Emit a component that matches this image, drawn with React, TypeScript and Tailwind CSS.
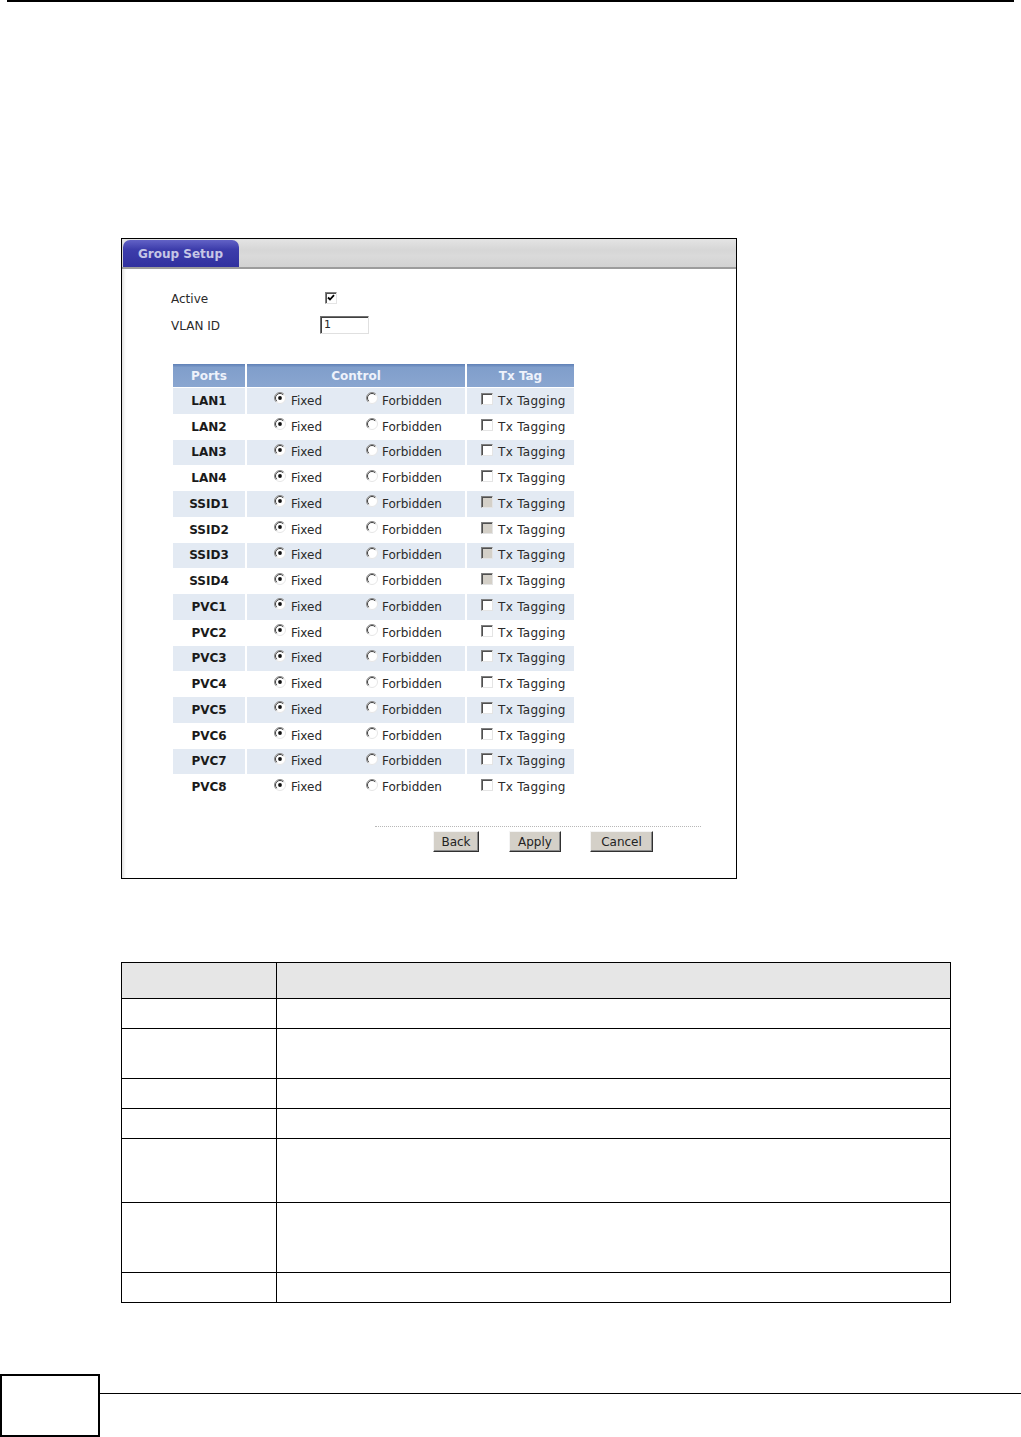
import React from "react";

const ports = [
  "LAN1", "LAN2", "LAN3", "LAN4",
  "SSID1", "SSID2", "SSID3", "SSID4",
  "PVC1", "PVC2", "PVC3", "PVC4", "PVC5", "PVC6", "PVC7", "PVC8",
];

function Radio({ checked }: { checked: boolean }) {
  return (
    <svg width="12" height="12" viewBox="0 0 12 12" className="shrink-0 mb-[5px]">
      <circle cx="6" cy="6" r="5.5" fill="#ffffff" />
      <path d="M2.1 9.9 A5.5 5.5 0 0 1 9.9 2.1" stroke="#8a8a8a" strokeWidth="1" fill="none" />
      <path d="M9.9 2.1 A5.5 5.5 0 0 1 2.1 9.9" stroke="#e6e6e6" strokeWidth="1" fill="none" />
      <path d="M2.8 9.2 A4.5 4.5 0 0 1 9.2 2.8" stroke="#404040" strokeWidth="1" fill="none" />
      {checked && <circle cx="6" cy="6" r="1.9" fill="#111111" />}
    </svg>
  );
}

function Box({ checked = false, disabled = false }: { checked?: boolean; disabled?: boolean }) {
  return (
    <span
      className={
        disabled
          ? "shrink-0 w-[12px] h-[12px] border border-t-[#808080] border-l-[#808080] border-r-[#e4e4e4] border-b-[#e4e4e4] bg-[#d4d0c8] shadow-[inset_1px_1px_0_#505050] mb-[4px] flex items-center justify-center"
          : "shrink-0 w-[12px] h-[12px] border border-t-[#808080] border-l-[#808080] border-r-[#e4e4e4] border-b-[#e4e4e4] bg-white shadow-[inset_1px_1px_0_#505050] mb-[4px] flex items-center justify-center"
      }
    >
      {checked && (
        <svg width="8" height="8" viewBox="0 0 8 8">
          <path d="M1 3.5 L3 5.5 L7 1.2" stroke="#000" strokeWidth="1.8" fill="none" />
        </svg>
      )}
    </span>
  );
}

function Btn({ label, w }: { label: string; w: string }) {
  return (
    <div
      className={
        "h-[21px] flex items-center justify-center bg-[#d4d0c8] border border-t-[#f4f4f4] border-l-[#f4f4f4] border-r-[#303030] border-b-[#303030] shadow-[inset_-1px_-1px_0_#8a8a8a] text-[12px] text-[#222]" +
        " " +
        w
      }
    >
      {label}
    </div>
  );
}

export default function App() {
  const tableRows = [36, 30, 50, 30, 30, 64, 70, 30];
  return (
    <div className="w-[1021px] h-[1437px] bg-white overflow-hidden font-['DejaVu_Sans',sans-serif] flex flex-col">
      {/* top rule */}
      <div className="mx-[7px] h-[2px] bg-black shrink-0" />

      {/* screen panel */}
      <div className="ml-[121px] mt-[236px] w-[616px] h-[641px] border border-black flex flex-col shrink-0 shadow-[inset_4px_0_3px_-2px_#e2e2e2]">
        <div className="h-[30px] shrink-0 bg-[linear-gradient(#e4e4e4,#d6d6d6_40%,#dadada_60%,#d2d2d2)] border-b-2 border-b-[#9c9c9c] flex items-end pl-[1px]">
          <div className="w-[116px] h-[27px] rounded-t-[7px] bg-[linear-gradient(#6262c6,#3d3dab_35%,#31319f)] flex items-center pl-[15px] text-[12px] font-bold text-[#c6c6e6]">
            Group Setup
          </div>
        </div>

        <div className="pl-[49px] pt-[16px] flex flex-col text-[12px] text-[#2a2a2a]">
          <div className="h-[27px] flex items-center">
            <span className="w-[149px]">Active</span>
            <span className="ml-[5px] mt-[2px]">
              <Box checked />
            </span>
          </div>
          <div className="h-[27px] flex items-center">
            <span className="w-[149px]">VLAN ID</span>
            <div className="w-[49px] h-[18px] border border-t-[#707070] border-l-[#707070] border-r-[#e0e0e0] border-b-[#e0e0e0] shadow-[inset_1px_1px_0_#404040] bg-white text-[11px] pl-[3px] leading-[16px] mb-[2px]">
              1
            </div>
          </div>
        </div>

        {/* ports table */}
        <div className="ml-[51px] mt-[25px] grid grid-cols-[72px_218px_107px] gap-x-[2px] text-[12px]">
          <div className="h-[23px] flex items-center justify-center bg-[linear-gradient(#5f80b6,#809ecb_15%,#8aa6d0)] text-[#eef2fb] font-bold">Ports</div>
          <div className="h-[23px] flex items-center justify-center bg-[linear-gradient(#5f80b6,#809ecb_15%,#8aa6d0)] text-[#eef2fb] font-bold">Control</div>
          <div className="h-[23px] flex items-center justify-center bg-[linear-gradient(#5f80b6,#809ecb_15%,#8aa6d0)] text-[#eef2fb] font-bold">Tx Tag</div>
          <div className="col-span-3 h-[1px]" />
          {ports.map((p, i) => {
            const bg = i % 2 === 0 ? "bg-[#e3eaf3]" : "bg-white";
            const dis = p.startsWith("SSID");
            return (
              <React.Fragment key={p}>
                <div className={"h-[25.75px] flex items-center justify-center font-bold text-[#1a1a1a] " + bg}>{p}</div>
                <div className={"h-[25.75px] flex items-center pl-[27px] text-[#2a2a2a] " + bg}>
                  <div className="w-[92px] flex items-center gap-[5px]">
                    <Radio checked />
                    <span>Fixed</span>
                  </div>
                  <div className="flex items-center gap-[4px]">
                    <Radio checked={false} />
                    <span>Forbidden</span>
                  </div>
                </div>
                <div className={"h-[25.75px] flex items-center pl-[14px] gap-[5px] text-[#2a2a2a] " + bg}>
                  <Box disabled={dis} />
                  <span className="tracking-[0.3px]">Tx Tagging</span>
                </div>
              </React.Fragment>
            );
          })}
        </div>

        <div className="ml-[253px] mt-[26px] w-[326px] border-t border-dotted border-t-[#b8b8b8]" />
        <div className="ml-[311px] mt-[4px] flex">
          <Btn label="Back" w="w-[46px]" />
          <div className="w-[30px]" />
          <Btn label="Apply" w="w-[52px]" />
          <div className="w-[29px]" />
          <Btn label="Cancel" w="w-[63px]" />
        </div>
      </div>

      {/* description table */}
      <div className="ml-[121px] mt-[83px] w-[830px] border-[1.5px] border-black shrink-0 flex flex-col">
        {tableRows.map((h, i) => (
          <div
            key={i}
            className={
              "flex " +
              (i > 0 ? "border-t-[1.5px] border-t-black " : "") +
              (i === 0 ? "bg-[#e6e6e6]" : "bg-white")
            }
            style={{ height: i === 0 ? h - 1.5 : h }}
          >
            <div className="w-[155px] border-r-[1.5px] border-r-black" />
            <div className="flex-1" />
          </div>
        ))}
      </div>

      {/* footer */}
      <div className="mt-[71px] flex shrink-0">
        <div className="w-[100px] h-[63px] border-2 border-black shrink-0" />
        <div className="flex-1 mt-[19px] h-[1.5px] bg-black" />
      </div>
    </div>
  );
}
